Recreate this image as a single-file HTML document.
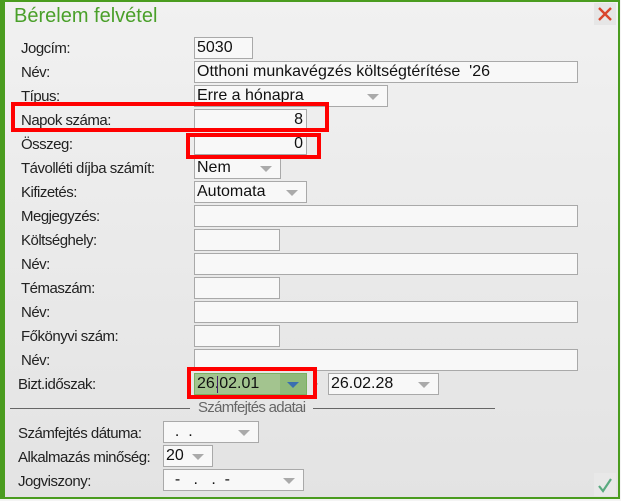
<!DOCTYPE html>
<html><head><meta charset="utf-8"><style>
*{margin:0;padding:0;box-sizing:border-box}
body{width:621px;height:499px;overflow:hidden;background:#f4f4f4;font-family:"Liberation Sans",Arial,sans-serif;position:relative}
#dlg{position:absolute;left:0;top:0;width:620px;height:499px;border-top:2px solid #4a9c1f;border-left:5px solid #4a9c1f;border-right:2px solid #4a9c1f;border-bottom:2px solid #4a9c1f;background:linear-gradient(#f1f1f1,#e3e3e3)}
.a{position:absolute}
.t{position:absolute;font-size:20px;color:#4aa02a}
.l{position:absolute;font-size:15px;letter-spacing:-0.5px;color:#222;line-height:20px;white-space:nowrap}
.i{position:absolute;height:22px;border:1px solid #a9a9a9;background:#f8f8f8;font-size:16px;line-height:20px;padding-left:2px;color:#111;white-space:nowrap;overflow:hidden}
.s::after{content:"";position:absolute;right:8px;top:8px;border-left:6px solid transparent;border-right:6px solid transparent;border-top:6px solid #aaa}
.r{position:absolute;border:4px solid #f00}
</style></head><body>
<div id="dlg"></div>
<div class="t" style="left:14px;top:5px">Bérelem felvétel</div>
<div class="a" style="left:594px;top:3px;width:22px;height:22px;background:#e6e6e6">
<svg width="22" height="22"><path d="M5 5L17 17M17 5L5 17" stroke="#d9452c" stroke-width="2.4"/></svg></div>

<div class="l" style="left:21px;top:39px">Jogcím:</div>
<div class="l" style="left:21px;top:63px">Név:</div>
<div class="l" style="left:21px;top:87px">Típus:</div>
<div class="l" style="left:21px;top:111px">Napok száma:</div>
<div class="l" style="left:21px;top:135px">Összeg:</div>
<div class="l" style="left:21px;top:159px">Távolléti díjba számít:</div>
<div class="l" style="left:21px;top:183px">Kifizetés:</div>
<div class="l" style="left:21px;top:207px">Megjegyzés:</div>
<div class="l" style="left:21px;top:231px">Költséghely:</div>
<div class="l" style="left:21px;top:255px">Név:</div>
<div class="l" style="left:21px;top:279px">Témaszám:</div>
<div class="l" style="left:21px;top:303px">Név:</div>
<div class="l" style="left:21px;top:327px">Főkönyvi szám:</div>
<div class="l" style="left:21px;top:351px">Név:</div>
<div class="l" style="left:18px;top:375px">Bizt.időszak:</div>

<div class="i" style="left:194px;top:37px;width:59px">5030</div>
<div class="i" style="left:194px;top:61px;width:384px">Otthoni munkavégzés költségtérítése&nbsp; '26</div>
<div class="i s" style="left:194px;top:85px;width:194px">Erre a hónapra</div>
<div class="i" style="left:194px;top:109px;width:113px;text-align:right;padding-right:3px">8</div>
<div class="i" style="left:194px;top:133px;width:113px;text-align:right;padding-right:3px">0</div>
<div class="i s" style="left:194px;top:157px;width:87px">Nem</div>
<div class="i s" style="left:194px;top:181px;width:113px">Automata</div>
<div class="i" style="left:194px;top:205px;width:384px"></div>
<div class="i" style="left:194px;top:229px;width:86px"></div>
<div class="i" style="left:194px;top:253px;width:384px"></div>
<div class="i" style="left:194px;top:277px;width:86px"></div>
<div class="i" style="left:194px;top:301px;width:384px"></div>
<div class="i" style="left:194px;top:325px;width:86px"></div>
<div class="i" style="left:194px;top:349px;width:384px"></div>
<div class="i" style="left:194px;top:373px;width:113px;background:#a3c48f;border-color:#7ab060">26.02.01
<div class="a" style="left:85px;top:0;width:26px;height:20px;background:#8fb97a"></div>
<div class="a" style="left:92px;top:8px;border-left:6px solid transparent;border-right:6px solid transparent;border-top:6px solid #3a6fb0"></div>
<div class="a" style="left:22px;top:2px;width:1px;height:17px;background:#442266"></div></div>
<div class="l" style="left:313px;top:374px">-</div>
<div class="i s" style="left:328px;top:373px;width:111px">26.02.28</div>

<div class="a" style="left:10px;top:408px;width:180px;height:1px;background:#666"></div>
<div class="l" style="left:198px;top:398px;color:#666;letter-spacing:-0.7px">Számfejtés adatai</div>
<div class="a" style="left:313px;top:408px;width:182px;height:1px;background:#666"></div>

<div class="l" style="left:18px;top:424px">Számfejtés dátuma:</div>
<div class="l" style="left:18px;top:448px">Alkalmazás minőség:</div>
<div class="l" style="left:18px;top:472px">Jogviszony:</div>
<div class="i s" style="left:163px;top:421px;width:96px">&nbsp;&nbsp;.&nbsp;&nbsp;.</div>
<div class="i s" style="left:163px;top:445px;width:50px">20</div>
<div class="i s" style="left:163px;top:469px;width:141px">&nbsp;&nbsp;-&nbsp;&nbsp;&nbsp;.&nbsp;&nbsp;&nbsp;.&nbsp;&nbsp;-</div>

<div class="a" style="left:594px;top:473px;width:22px;height:23px;background:#e8e8e8">
<svg width="22" height="23"><path d="M5 13L9 18L17 6" fill="none" stroke="#5aaa80" stroke-width="2.2"/></svg></div>

<div class="r" style="left:11px;top:102px;width:318px;height:30px"></div>
<div class="r" style="left:186px;top:133px;width:135px;height:26px"></div>
<div class="r" style="left:187px;top:367px;width:130px;height:32px"></div>
</body></html>
